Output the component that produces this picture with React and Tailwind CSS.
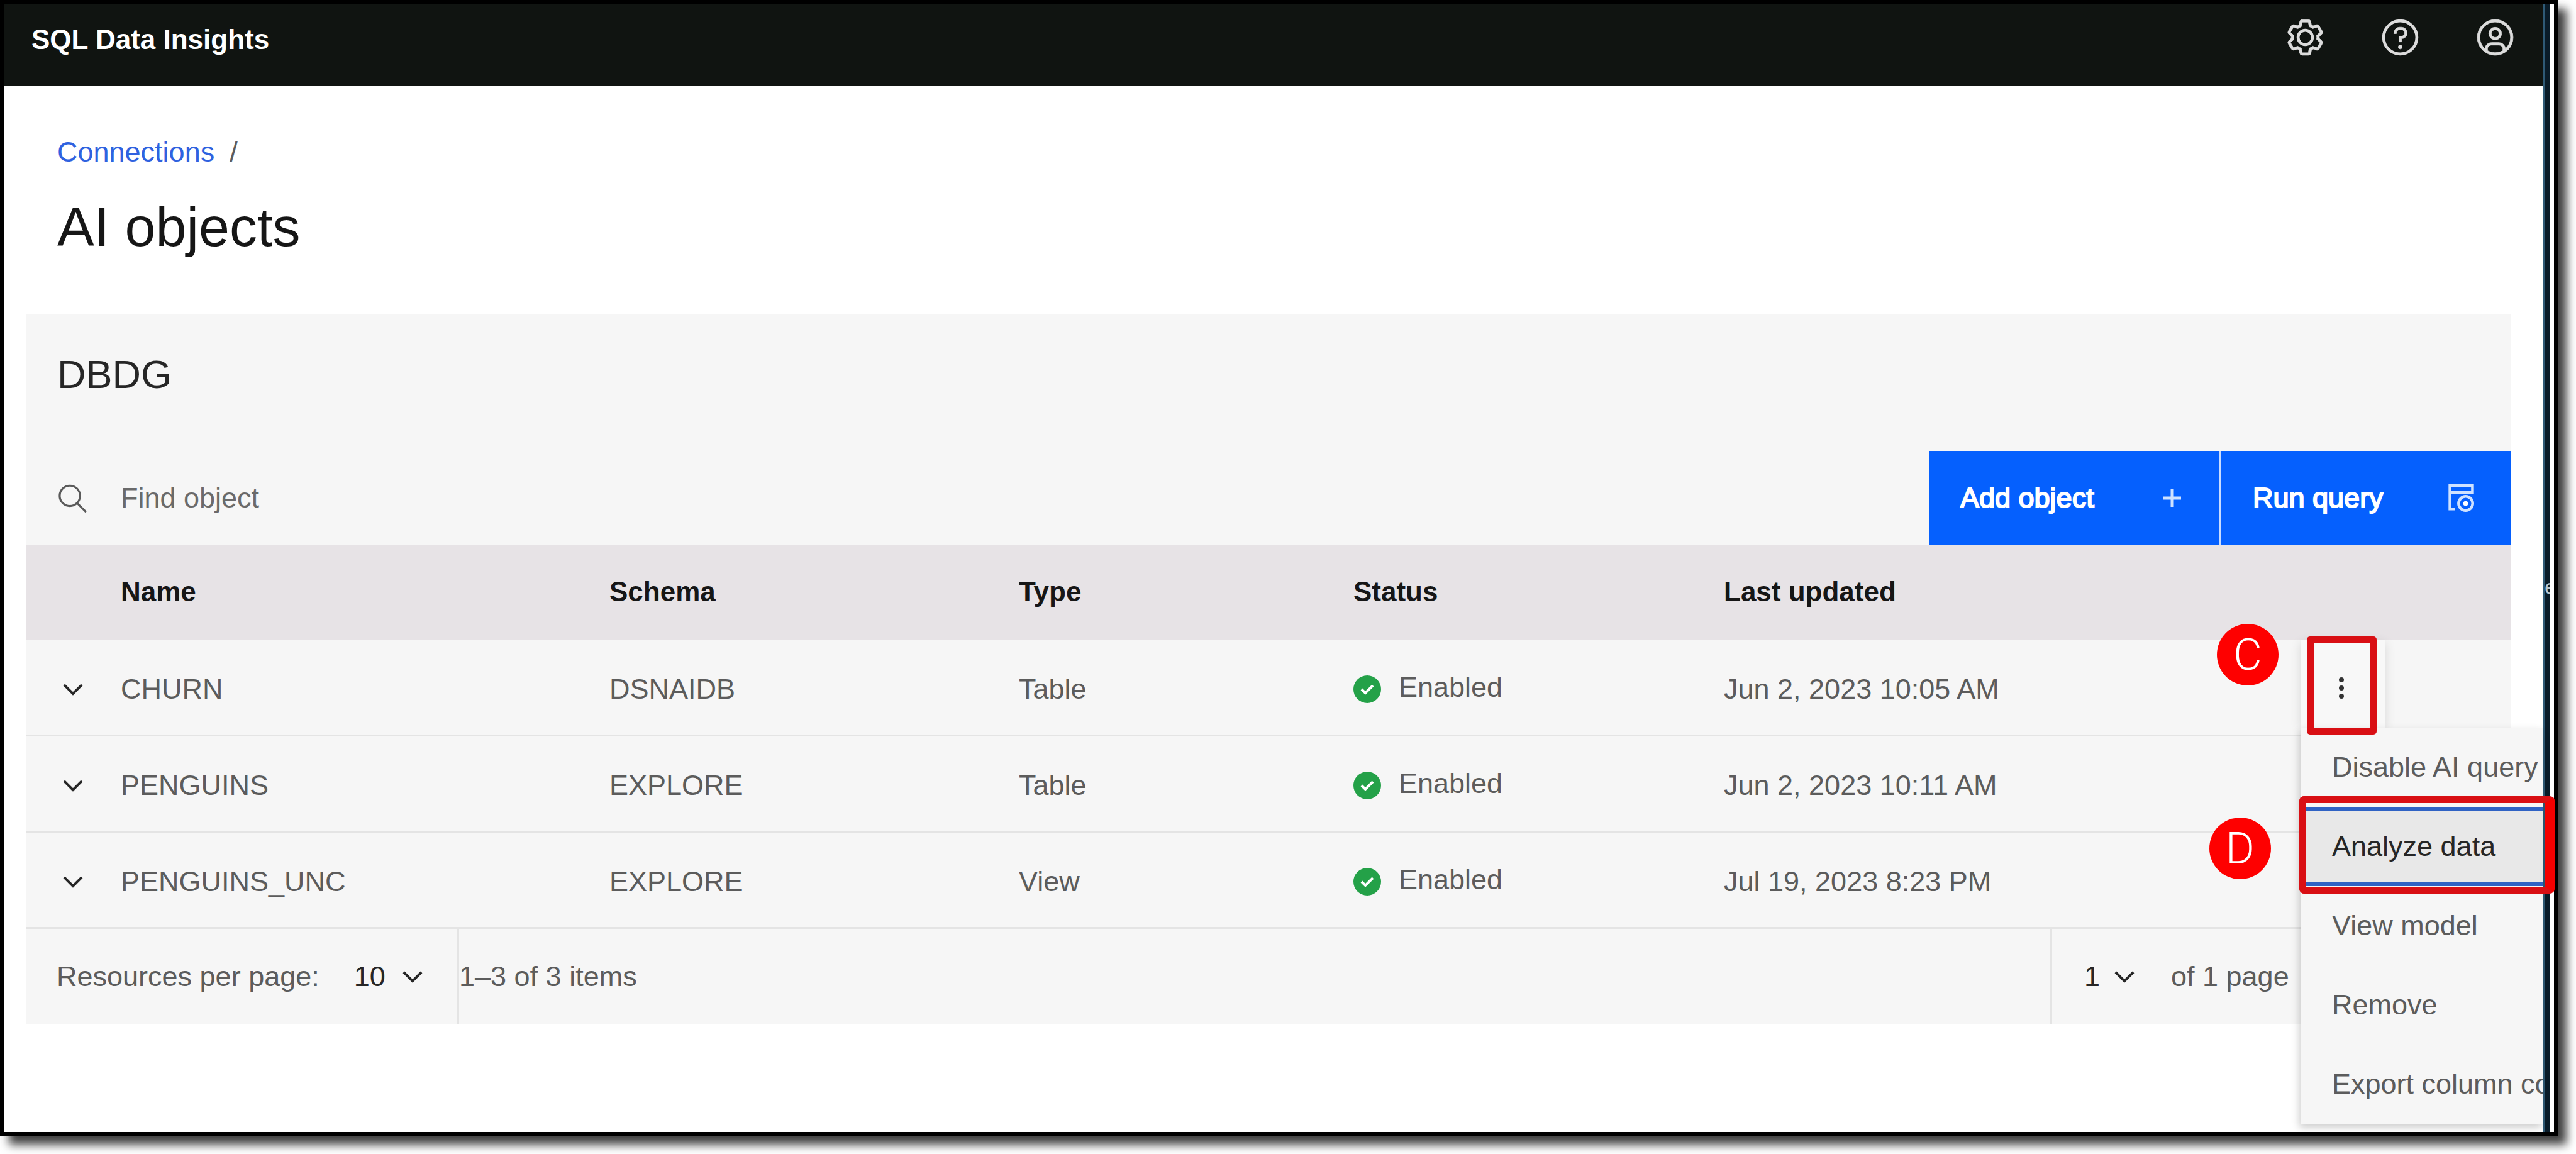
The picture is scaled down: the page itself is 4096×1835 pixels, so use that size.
import React from "react";

const objects = [
  { name: "CHURN", schema: "DSNAIDB", type: "Table", updated: "Jun 2, 2023 10:05 AM" },
  { name: "PENGUINS", schema: "EXPLORE", type: "Table", updated: "Jun 2, 2023 10:11 AM" },
  { name: "PENGUINS_UNC", schema: "EXPLORE", type: "View", updated: "Jul 19, 2023 8:23 PM" },
];

const menuItems = ["Disable AI query", "Analyze data", "View model", "Remove", "Export column co"];

function SettingsIcon() {
  return (
    <svg viewBox="0 0 32 32" className="size-[65px]" fill="currentColor" stroke="currentColor" strokeWidth="0.4" aria-hidden="true">
      <path d="M27,16.76c0-.25,0-.5,0-.76s0-.51,0-.77l1.92-1.68A2,2,0,0,0,29.3,11L26.94,7a2,2,0,0,0-1.73-1,2,2,0,0,0-.64.1l-2.43.82a11.35,11.35,0,0,0-1.31-.75l-.51-2.52a2,2,0,0,0-2-1.61H13.64a2,2,0,0,0-2,1.61l-.51,2.52a11.48,11.48,0,0,0-1.32.75L7.43,6.06A2,2,0,0,0,6.79,6,2,2,0,0,0,5.06,7L2.7,11a2,2,0,0,0,.41,2.51L5,15.24c0,.25,0,.5,0,.76s0,.51,0,.77L3.11,18.45A2,2,0,0,0,2.7,21L5.06,25a2,2,0,0,0,1.73,1,2,2,0,0,0,.64-.1l2.43-.82a11.35,11.35,0,0,0,1.31.75l.51,2.52a2,2,0,0,0,2,1.61h4.72a2,2,0,0,0,2-1.61l.51-2.52a11.48,11.48,0,0,0,1.32-.75l2.42.82a2,2,0,0,0,.64.1,2,2,0,0,0,1.73-1L29.3,21a2,2,0,0,0-.41-2.51ZM25.21,24l-3.43-1.16a8.86,8.86,0,0,1-2.71,1.57L18.36,28H13.64l-.71-3.55a9.36,9.36,0,0,1-2.7-1.57L6.79,24,4.43,20l2.72-2.4a8.9,8.9,0,0,1,0-3.13L4.43,12,6.79,8l3.43,1.16a8.86,8.86,0,0,1,2.71-1.57L13.64,4h4.72l.71,3.55a9.36,9.36,0,0,1,2.7,1.57L25.21,8,27.57,12l-2.72,2.4a8.9,8.9,0,0,1,0,3.13L27.57,20Z" />
      <circle cx="16" cy="16" r="5.6" fill="none" strokeWidth="2.3" />
    </svg>
  );
}

function HelpIcon() {
  return (
    <svg viewBox="0 0 32 32" className="size-[65px]" fill="currentColor" stroke="currentColor" strokeWidth="0.4" aria-hidden="true">
      <circle cx="16" cy="16" r="13" fill="none" strokeWidth="2.3" />
      <circle cx="16" cy="23.5" r="1.5" />
      <path d="M17,8H15.5A4.49,4.49,0,0,0,11,12.5V13h2v-.5A2.5,2.5,0,0,1,15.5,10H17a2.5,2.5,0,0,1,0,5H15v4.5h2V17a4.5,4.5,0,0,0,0-9Z" />
    </svg>
  );
}

function UserIcon() {
  return (
    <svg viewBox="0 0 32 32" className="size-[65px]" fill="currentColor" stroke="currentColor" strokeWidth="0.4" aria-hidden="true">
      <path d="M16,8a5,5,0,1,0,5,5A5,5,0,0,0,16,8Zm0,8a3,3,0,1,1,3-3A3.0034,3.0034,0,0,1,16,16Z" />
      <path d="M16,2A14,14,0,1,0,30,16,14.0158,14.0158,0,0,0,16,2ZM10,26.3765V25a3.0033,3.0033,0,0,1,3-3h6a3.0033,3.0033,0,0,1,3,3v1.3765a11.8989,11.8989,0,0,1-12,0Zm13.9925-1.4507A5.0016,5.0016,0,0,0,19,20H13a5.0016,5.0016,0,0,0-4.9925,4.9258,12,12,0,1,1,15.985,0Z" />
    </svg>
  );
}

function Chevron({ className = "" }) {
  return (
    <svg viewBox="0 0 16 16" className={`size-[48px] ${className}`} fill="none" stroke="currentColor" strokeWidth="1.3" aria-hidden="true">
      <path d="M3.3 5.6 8 10.3l4.7-4.7" />
    </svg>
  );
}

function SearchIcon() {
  return (
    <svg viewBox="0 0 142 142" className="size-[45px]" fill="none" stroke="#5a5a5a" strokeWidth="10" aria-hidden="true">
      <circle cx="57" cy="58" r="51" />
      <path d="m94 95 44 44" />
    </svg>
  );
}

function RunQueryIcon() {
  return (
    <svg viewBox="0 0 128 140" className="h-[45px] w-[41px]" fill="none" stroke="#cfe2ff" strokeWidth="14" aria-hidden="true">
      <path d="M34 122H8V7h112v34H8" />
      <circle cx="86" cy="95" r="35" />
      <circle cx="86" cy="95" r="12" fill="#fff" stroke="none" />
    </svg>
  );
}

function PlusIcon() {
  return (
    <svg viewBox="0 0 28 28" className="size-[28px]" stroke="#cfe2ff" strokeWidth="5" aria-hidden="true">
      <path d="M14 0v28M0 14h28" />
    </svg>
  );
}

function EnabledIcon() {
  return (
    <svg viewBox="0 0 44 44" className="size-[44px]" aria-hidden="true">
      <circle cx="22" cy="22" r="22" fill="#24a148" />
      <path d="m13 22 6 6 12-12" fill="none" stroke="#fff" strokeWidth="4" />
    </svg>
  );
}

function Callout({ letter, className }) {
  return (
    <div className={`absolute flex size-[98px] items-center justify-center rounded-full bg-[#fe0000] font-[Roboto] text-[70px] leading-none font-light text-white ${className}`}>
      {letter}
    </div>
  );
}

function PageSelect({ label, value, className }) {
  return (
    <div className={`relative flex h-full items-center ${className}`}>
      <select aria-label={label} defaultValue={value} className="h-full w-full appearance-none bg-transparent p-0 text-[#262626] outline-none">
        <option value={value}>{value}</option>
      </select>
      <Chevron className="pointer-events-none absolute right-0 text-[#262626]" />
    </div>
  );
}

function RowActions() {
  return (
    <div className="relative h-[139px] w-[135px]">
      <button type="button" aria-label="Open actions" aria-expanded="true" className="flex h-full w-full items-center justify-center bg-[#f8f8f8] shadow-[0_4px_16px_rgba(0,0,0,0.12)]">
        <svg viewBox="0 0 8 34" className="mt-[12px] mr-[5px] h-[34px] w-[8px]" fill="#333" aria-hidden="true">
          <circle cx="4" cy="4" r="4" />
          <circle cx="4" cy="17" r="4" />
          <circle cx="4" cy="30" r="4" />
        </svg>
      </button>
      <div className="absolute top-full left-0 w-[385px] shadow-[-2px_6px_12px_rgba(0,0,0,0.2)]">
        <ul className="overflow-hidden bg-[#f6f6f6]" role="menu">
          {menuItems.map((item) => (
            <li key={item} role="none">
              <button
                type="button"
                role="menuitem"
                className={
                  item === "Analyze data"
                    ? "flex h-[126px] w-full items-center border-y-[6px] border-[#2f62c4] bg-[#e8e8e8] pl-[50px] whitespace-nowrap text-[#262626]"
                    : "flex h-[126px] w-full items-center pl-[50px] whitespace-nowrap text-[#5c5c5c]"
                }
              >
                {item}
              </button>
            </li>
          ))}
        </ul>
      </div>
      <div className="pointer-events-none absolute -top-[6px] left-[10px] h-[156px] w-[111px] rounded-[5px] border-[11px] border-[#d90f14]" />
      <div className="pointer-events-none absolute top-[248px] -left-[2px] h-[155px] w-[406px] rounded-[8px] border-[11px] border-r-[15px] border-[#d90f14] border-r-[#f40000]" />
      <Callout letter="C" className="-top-[26px] -left-[133px]" />
      <Callout letter="D" className="top-[282px] -left-[145px]" />
    </div>
  );
}

export default function App() {
  const th = "h-[151px] p-0 pb-[4px] text-left align-middle text-[44px] font-bold text-[#161616]";
  const td = "h-[153px] border-b-[3px] border-[#e4e4e4] p-0 pt-[5px] align-middle";
  return (
    <div className="flex min-h-screen bg-white pr-[29px] pb-[29px] font-['Liberation_Sans',Arial,sans-serif] text-[45px] leading-[60px] text-[#5c5c5c]">
      <div className="flex flex-1 border-[6px] border-black bg-white shadow-[14px_14px_14px_rgba(0,0,0,0.75)]">
        <div className="min-w-0 flex-1">
          <header className="flex h-[131px] items-center justify-between bg-[#101411] text-white">
            <span className="pb-[18px] pl-[44px] text-[44px] font-bold">SQL Data Insights</span>
            <nav className="flex h-full pb-[24px] text-[#dcdcdc]" aria-label="Tools">
              <button type="button" aria-label="Settings" className="flex w-[151px] items-center justify-center"><SettingsIcon /></button>
              <button type="button" aria-label="Help" className="flex w-[151px] items-center justify-center"><HelpIcon /></button>
              <button type="button" aria-label="Account" className="flex w-[151px] items-center justify-center"><UserIcon /></button>
            </nav>
          </header>

          <main className="pr-[50px] pl-[35px]">
            <nav className="mt-[75px] flex gap-[24px] pl-[50px]" aria-label="Breadcrumb">
              <a href="#connections" className="text-[#2f62e0]">Connections</a>
              <span>/</span>
            </nav>
            <h1 className="mt-[34px] pl-[50px] text-[88px] leading-[110px] text-[#161616]">AI objects</h1>

            <section className="mt-[83px] bg-[#f6f6f6]">
              <h2 className="pt-[56px] pl-[50px] text-[63px] leading-[80px] text-[#262626]">DBDG</h2>

              <div className="mt-[82px] flex h-[150px]">
                <label className="flex flex-1 items-center pl-[52px]">
                  <SearchIcon />
                  <input type="text" aria-label="Find object" placeholder="Find object" className="ml-[54px] flex-1 bg-transparent outline-none placeholder:text-[#6a6a6a]" />
                </label>
                <div className="flex gap-[4px] bg-[#c9dcff] text-white [-webkit-text-stroke:2px_white]">
                  <button type="button" className="flex w-[461px] items-center justify-between bg-[#0560fe] pr-[60px] pl-[50px]">
                    Add object
                    <PlusIcon />
                  </button>
                  <button type="button" className="flex w-[461px] items-center justify-between bg-[#0560fe] pr-[59px] pl-[50px]">
                    Run query
                    <RunQueryIcon />
                  </button>
                </div>
              </div>

              <table className="w-full table-fixed border-separate border-spacing-0">
                <colgroup>
                  <col className="w-[151px]" />
                  <col className="w-[777px]" />
                  <col className="w-[651px]" />
                  <col className="w-[532px]" />
                  <col className="w-[589px]" />
                  <col />
                  <col className="w-[335px]" />
                </colgroup>
                <thead className="bg-[#e7e3e6]">
                  <tr>
                    <th className={th} aria-label="Expand" />
                    <th className={th}>Name</th>
                    <th className={th}>Schema</th>
                    <th className={th}>Type</th>
                    <th className={th}>Status</th>
                    <th className={th}>Last updated</th>
                    <th className={th} aria-label="Actions" />
                  </tr>
                </thead>
                <tbody>
                  {objects.map((o, i) => (
                    <tr key={o.name}>
                      <td className={td}>
                        <button type="button" aria-label={`Expand ${o.name}`} className="ml-[51px] block text-[#262626]"><Chevron /></button>
                      </td>
                      <td className={td}>{o.name}</td>
                      <td className={td}>{o.schema}</td>
                      <td className={td}>{o.type}</td>
                      <td className={td}>
                        <span className="flex items-center gap-[28px]">
                          <EnabledIcon />
                          <span className="pb-[6px]">Enabled</span>
                        </span>
                      </td>
                      <td className={td}>{o.updated}</td>
                      <td className="h-[153px] border-b-[3px] border-[#e4e4e4] p-0 align-top">{i === 0 && <RowActions />}</td>
                    </tr>
                  ))}
                </tbody>
              </table>

              <footer className="flex h-[152px] items-center">
                <div className="flex h-full w-[686px] items-center gap-[55px] pl-[49px]">
                  <span>Resources per page:</span>
                  <PageSelect label="Resources per page" value="10" className="w-[117px]" />
                </div>
                <div className="flex h-full flex-1 items-center border-l-[3px] border-[#e4e4e4]">1–3 of 3 items</div>
                <div className="flex h-full w-[733px] items-center gap-[50px] border-l-[3px] border-[#e4e4e4] pl-[51px]">
                  <PageSelect label="Page" value="1" className="w-[88px]" />
                  <span>of 1 page</span>
                </div>
              </footer>
            </section>
          </main>
        </div>
        <aside className="mr-[6px] w-[12px] overflow-hidden border-l-[3px] border-[#2f5a76] bg-[#0a1c29] pt-[907px] text-[34px] leading-[40px] text-[#b9c6cf]">e</aside>
      </div>
    </div>
  );
}
